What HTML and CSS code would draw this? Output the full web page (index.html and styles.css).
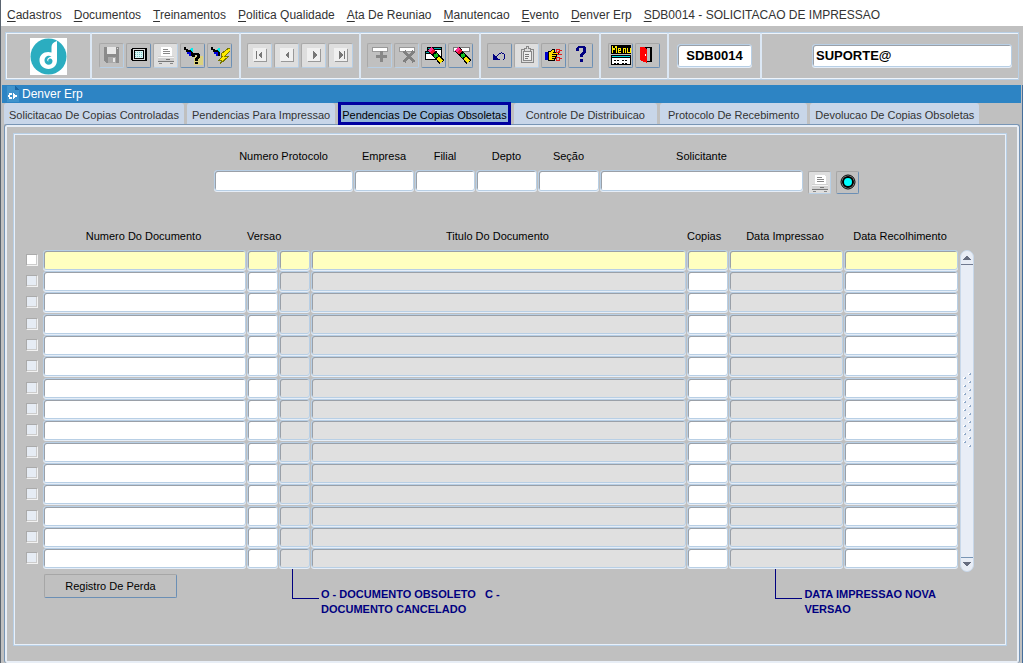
FILE: index.html
```html
<!DOCTYPE html>
<html lang="pt-BR">
<head>
<meta charset="utf-8">
<title>Denver Erp</title>
<link rel="stylesheet" href="styles.css">
</head>
<body>
<nav class="menubar">
  <a href="#"><u>C</u>adastros</a>
  <a href="#"><u>D</u>ocumentos</a>
  <a href="#"><u>T</u>reinamentos</a>
  <a href="#"><u>P</u>olitica Qualidade</a>
  <a href="#"><u>A</u>ta De Reuniao</a>
  <a href="#"><u>M</u>anutencao</a>
  <a href="#"><u>E</u>vento</a>
  <a href="#"><u>D</u>enver Erp</a>
  <a href="#"><u>S</u>DB0014 - SOLICITACAO DE IMPRESSAO</a>
</nav>

<header class="toolbar">
  <div class="group group-logo">
    <svg class="logo" viewBox="0 0 37 37" aria-label="Denver">
      <rect width="37" height="37" fill="#fff"/>
      <circle cx="18.500" cy="18.500" r="18" fill="#2badc0"/>
      <path d="M27 3C23.500 4 21.500 6 21.500 9V14.500C15 12.500 9.500 16.500 9.500 22C9.500 27.500 13.500 31 18.500 31C23.500 31 27 27.500 27 22Z" fill="#fff"/>
      <path d="M21.500 18.500C18 16.500 14.500 19 14.500 22.500C14.500 25 16.500 26.800 18.500 26.800C21 26.800 22.500 25 22.500 23C22.500 21 20.500 20 19 21C18 21.600 18 23 18.600 23.600C16.500 23 16.500 19.500 21.500 18.500Z" fill="#2badc0"/>
    </svg>
  </div>
  <div class="group">
    <button class="tool off" aria-label="Salvar"><svg viewBox="0 0 20 20"><path d="M2 2H17V18H4L2 16Z" fill="#8b8b8b"/><path d="M5 2H14V9H5Z" fill="#e8e8e8"/><path d="M6 12H14V18H6Z" fill="#aaa"/><path d="M11 13H13V17H11Z" fill="#e8e8e8"/><path d="M15 3H16V4H15Z" fill="#ddd"/></svg></button>
    <button class="tool" aria-label="Tela"><svg viewBox="0 0 20 20"><path d="M3 3H17L18 4V15L17 16H3L2 15V4Z" fill="#000"/><path d="M4 4H16V15H4Z" fill="#d8d8d8"/><path d="M5 5H15V14H5Z" fill="#000"/><path d="M6 6H14V13H6Z" fill="#d8f4f4"/><path d="M6 7H14M6 9H14M6 11H14" stroke="#7cc4c4" stroke-dasharray="1 1"/></svg></button>
    <button class="tool off light" aria-label="Imprimir"><svg viewBox="0 0 20 20"><use href="#printer"/></svg></button>
    <button class="tool" aria-label="Consultar"><svg viewBox="0 0 20 20"><use href="#torch"/><path d="M11 11H20V20H11Z" fill="#dcd27c"/><path d="M10 8H16V9H17V13H16V14H15V16H12V13H13V12H14V10H12V12H9V9H10ZM12 17H15V19H12Z" fill="#000"/></svg></button>
    <button class="tool" aria-label="Executar"><svg viewBox="0 0 20 20"><use href="#torch"/><path d="M19 3L11 9V11H13L9 15H12L10 19L18 12V11H15L20 6V3Z" fill="#ffec00" stroke="#777700"/></svg></button>
  </div>
  <div class="group tight">
    <button class="tool off light" aria-label="Primeiro"><svg viewBox="0 0 20 20"><use href="#page"/><path d="M6 6H7V14H6ZM12 6V14L8 10Z" fill="#777"/></svg></button>
    <button class="tool off light" aria-label="Anterior"><svg viewBox="0 0 20 20"><use href="#page"/><path d="M12 6V14L8 10Z" fill="#777"/></svg></button>
    <button class="tool off light" aria-label="Proximo"><svg viewBox="0 0 20 20"><use href="#page"/><path d="M9 6V14L13 10Z" fill="#777"/></svg></button>
    <button class="tool off light" aria-label="Ultimo"><svg viewBox="0 0 20 20"><use href="#page"/><path d="M13 6H14V14H13ZM8 6V14L12 10Z" fill="#777"/></svg></button>
  </div>
  <div class="group tight">
    <button class="tool off" aria-label="Inserir"><svg viewBox="0 0 20 20"><use href="#row"/><path d="M10 6H13V10H17V13H13V17H10V13H6V10H10Z" fill="#888"/></svg></button>
    <button class="tool off" aria-label="Excluir"><svg viewBox="0 0 20 20"><use href="#row"/><path d="M7 6L17 17M17 6L7 17" stroke="#808080" stroke-width="3"/></svg></button>
    <button class="tool" aria-label="Limpar tela"><svg viewBox="0 0 20 20"><path d="M3 2H18V12H3Z" fill="#000"/><path d="M4 3H17V4H4Z" fill="#0aa"/><path d="M4 5H17V11H4Z" fill="#fff"/><path d="M1 6H13V15H1Z" fill="#000"/><path d="M2 7H12V8H2Z" fill="#0aa"/><path d="M2 9H12V14H2Z" fill="#fff"/><use href="#eraser"/></svg></button>
    <button class="tool" aria-label="Limpar"><svg viewBox="0 0 20 20"><path d="M2 2H18V6H2Z" fill="#fff" stroke="#777"/><use href="#eraser"/></svg></button>
  </div>
  <div class="group tight">
    <button class="tool" aria-label="Desfazer"><svg viewBox="0 0 20 20"><path d="M3 8V15H10V14H8L3 9Z" fill="#000080"/><path d="M6 12L9 9C11 7 15 8 15 11C15 13 14 14 13 15" fill="none" stroke="#000080"/></svg></button>
    <button class="tool off light" aria-label="Colar"><svg viewBox="0 0 20 20"><path d="M4 4H16V17H4Z" fill="none" stroke="#888"/><path d="M6 6H14V15H6Z" fill="#eee" stroke="#888"/><path d="M7 3H9V1H11V3H13V6H7Z" fill="#ddd" stroke="#888"/><path d="M8 9H12M8 11H12M8 13H11" stroke="#777"/></svg></button>
    <button class="tool" aria-label="Lista"><svg viewBox="0 0 20 20"><path d="M1 7H4V15H1Z" fill="#00c"/><path d="M4 7L7 6L9 4L11 5L10 7H14V9H12V11H11V13H10V15H4Z" fill="#ffdf00" stroke="#000"/><path d="M8 9H12M8 11H11M8 13H10" stroke="#000"/><path d="M12 4H15V7H12ZM12 12H15V15H12ZM14 7L18 5M14 12L18 14M13 9H18" fill="none" stroke="#e21a1a"/></svg></button>
    <button class="tool" aria-label="Ajuda"><svg viewBox="0 0 20 20"><path d="M5 3L7 1H13L15 3V7L12 10V12H9V9L12 6V3H8V6H5ZM9 14H12V17H9Z" fill="#000080"/></svg></button>
  </div>
  <div class="group">
    <button class="tool" aria-label="Menu"><svg viewBox="0 0 20 20"><path d="M0 0H20V9H0ZM0 10H20V20H0Z" fill="#000"/><path d="M1 8V1L3 5L5 1V8M10 7H7V3H9V5H7M12 8V3H14V8M16 3V7H19V3" fill="none" stroke="#ffec00"/><path d="M1 11H19V12H1Z" fill="#0dd"/><path d="M1 13H19V19H1Z" fill="#fff"/><path d="M3 15H9M11 15H17M3 18H9M11 18H17" stroke="#000" stroke-dasharray="2 1"/></svg></button>
    <button class="tool" aria-label="Sair"><svg viewBox="0 0 20 20"><path d="M2 2H14V17H5Z" fill="#000"/><path d="M9 3H12V16H9Z" fill="#bbb"/><path d="M2 2H6L9 4V18L2 15Z" fill="#f00"/><path d="M7 9H8V11H7Z" fill="#fff"/></svg></button>
  </div>
  <div class="group group-code"><input class="field strong code" aria-label="Programa" value="SDB0014"></div>
  <div class="group group-user"><input class="field strong" aria-label="Usuario" value="SUPORTE@"></div>
</header>

<main class="window">
  <h1 class="titlebar">
    <svg class="doc" viewBox="0 0 12 16"><path d="M0 0H8L12 4V16H0Z" fill="#3f93cc"/><path d="M8 0V4H12Z" fill="#1b66a3"/><path d="M2 7H5V9H3V11H5V13H2V11H1V9H2ZM6 7L11 10L6 13Z" fill="#fff"/></svg>
    Denver Erp
  </h1>
  <div class="tabs" role="tablist">
    <button class="tab" role="tab">Solicitacao De Copias Controladas</button>
    <button class="tab" role="tab">Pendencias Para Impressao</button>
    <button class="tab active" role="tab" aria-selected="true">Pendencias De Copias Obsoletas</button>
    <button class="tab wide" role="tab">Controle De Distribuicao</button>
    <button class="tab medium" role="tab">Protocolo De Recebimento</button>
    <button class="tab" role="tab">Devolucao De Copias Obsoletas</button>
  </div>
  <div class="panel">
    <section class="frame">
      <form class="search">
        <label>Numero Protocolo<input class="field"></label>
        <label>Empresa<input class="field"></label>
        <label>Filial<input class="field"></label>
        <label>Depto<input class="field"></label>
        <label>Seção<input class="field"></label>
        <label>Solicitante<input class="field"></label>
        <div class="actions">
          <button type="button" class="tool off light" aria-label="Imprimir"><svg viewBox="0 0 20 20"><use href="#printer"/></svg></button>
          <button type="button" class="tool" aria-label="Filtrar"><svg class="round" viewBox="0 0 20 20"><circle cx="10" cy="9" r="7" fill="#aaa" stroke="#000"/><circle cx="10" cy="9" r="5" fill="#0ff" stroke="#000" stroke-width="2"/></svg></button>
        </div>
      </form>

      <div class="grid">
        <table class="records">
          <colgroup>
            <col class="c-check"><col class="c-doc"><col class="c-ver"><col class="c-ver"><col><col class="c-copies"><col class="c-print"><col class="c-return">
          </colgroup>
          <thead>
            <tr><th></th><th>Numero Do Documento</th><th colspan="2" class="left">Versao</th><th>Titulo Do Documento</th><th class="left">Copias</th><th>Data Impressao</th><th>Data Recolhimento</th></tr>
          </thead>
          <tbody id="rows"></tbody>
        </table>
        <div class="scroll">
          <button class="arrow up" aria-label="Subir"><svg viewBox="0 0 8 5"><path d="M0 5L4 0L8 5Z" fill="#666d80"/></svg></button>
          <svg class="grip" viewBox="0 0 8 76"><defs><pattern id="dots" width="8" height="8" patternUnits="userSpaceOnUse"><path d="M5 0H7V1H6V2H5ZM0 4H2V5H1V6H0Z" fill="#fff"/><path d="M6 2V1H7V0H8V2ZM1 6V5H2V4H3V6Z" fill="#8fa9c9"/></pattern></defs><rect width="8" height="76" fill="url(#dots)"/></svg>
          <button class="arrow down" aria-label="Descer"><svg viewBox="0 0 8 5"><path d="M0 0L4 5L8 0Z" fill="#666d80"/></svg></button>
        </div>
      </div>

      <footer class="foot">
        <button class="plain">Registro De Perda</button>
        <p class="note"><span class="elbow"></span><span>O - DOCUMENTO OBSOLETO &nbsp; C -<br>DOCUMENTO CANCELADO</span></p>
        <p class="note note-end"><span class="elbow"></span><span>DATA IMPRESSAO NOVA<br>VERSAO</span></p>
      </footer>
    </section>
  </div>
</main>

<svg class="defs" aria-hidden="true">
  <defs>
    <g id="printer"><path d="M5 2H14L16 4V11H5Z" fill="#fff"/><path d="M7 4H12M7 6H14M7 8H14" stroke="#888"/><path d="M2 11H18V17H2Z" fill="#d0d0d0"/><path d="M2 12H18V13H2Z" fill="#f4f4f4"/><path d="M10 14H14V15H10ZM2 16H18V17H2Z" fill="#777"/><path d="M3 18H6M14 18H17" stroke="#888"/></g>
    <g id="torch"><path d="M1 2H3V4H5V5H10V11H7V9H5V7H3V5H1Z" fill="#000"/><path d="M6 4L10 3V7Z" fill="#0ee"/><path d="M4 7H8V11H6V9H4Z" fill="#0000e0"/></g>
    <g id="page"><path d="M4 4H17V17H4Z" fill="#999"/><path d="M3 3H16V16H3Z" fill="#f0f0f0"/></g>
    <g id="row"><path d="M2 2H17V6H2Z" fill="#fff" stroke="#999"/></g>
    <g id="eraser" fill="none"><path d="M6 4L18 17" stroke="#000" stroke-width="6"/><path d="M6 4L8 6" stroke="#ff2f92" stroke-width="5"/><path d="M8 6L10 8" stroke="#e81030" stroke-width="5"/><path d="M11 9L13 12" stroke="#10c020" stroke-width="4"/><path d="M14 13L18 17" stroke="#ffe800" stroke-width="4"/></g>
  </defs>
</svg>
<script src="rows.js"></script>
</body>
</html>
```

FILE: styles.css
```css
* { box-sizing: border-box; }

body {
  margin: 0;
  min-height: 100vh;
  display: flex;
  flex-direction: column;
  border-left: 1px solid #5a6470;
  background: #c0c0c0;
  color: #000;
  font-family: "Liberation Sans", Arial, sans-serif;
  font-size: 11px;
}

button, input { font: inherit; color: inherit; margin: 0; }
button { padding: 0; }
svg { display: block; shape-rendering: crispEdges; }
.defs { display: none; }
.round { shape-rendering: auto; }

.menubar {
  display: flex;
  gap: 12px;
  height: 26px;
  padding: 3px 6px 0;
  align-items: center;
  background: #fff;
  font-size: 12px;
  line-height: 16px;
  white-space: nowrap;
}
.menubar a { color: #333; text-decoration: none; }
.menubar u { text-underline-offset: 2px; }

.toolbar {
  display: flex;
  height: 48px;
  margin: 6px 4px 5px;
  border: 1px solid #b8cfe5;
  box-shadow: inset 0 1px #eef4fb, inset 0 -1px #eef4fb, inset 1px 0 #eef4fb;
}
.group {
  display: flex;
  align-items: center;
  gap: 2px;
  padding: 0 7px 2px;
  border-right: 2px solid #dce8f5;
}
.group.tight { padding: 0 6px 2px; }
.group-logo { padding: 0 23px 0 24px; }
.group-code { padding: 0 8px 2px; }
.group-user { flex: 1; border-right: 0; padding: 0 6px 2px 50px; }
.group-user .field { flex: 1; min-width: 0; }
.logo { width: 37px; height: 37px; shape-rendering: auto; }

.tool {
  display: grid;
  place-items: center;
  width: 25px;
  height: 25px;
  border: 1px solid;
  border-color: #a6a6a6 #6b8fb5 #6b8fb5 #a6a6a6;
  border-radius: 2px;
  background: #c0c0c0;
}
.tool svg { width: 20px; height: 20px; }
.tool.off { border-color: #a9a9a9 #b8cfe5 #b8cfe5 #a9a9a9; }
.tool.light { background: #dedede; }

.field {
  height: 21px;
  width: 100%;
  padding: 0 3px;
  border: 1px solid #b8cfe5;
  border-radius: 3px;
  background: #fff;
  box-shadow: inset 1px 1px #9aa0a8, 0 1px #e6eef8;
  outline: 0;
}
.field.strong { height: 23px; font-size: 13px; font-weight: bold; }
.field.code { width: 75px; text-align: center; }

.window {
  flex: 1;
  display: flex;
  flex-direction: column;
  border-right: 1px solid #466f9c;
}
.titlebar {
  display: flex;
  align-items: center;
  gap: 3px;
  height: 18px;
  margin: 0 1px;
  padding-left: 5px;
  background: #2d84c4;
  color: #fff;
  font-size: 12px;
  font-weight: normal;
}
.doc { width: 12px; height: 16px; }

.tabs { display: flex; gap: 3px; padding: 0 3px; height: 21px; white-space: nowrap; }
.tab {
  padding: 2px 5px 0;
  border: 0;
  border-radius: 3px 3px 0 0;
  background: #c8d6e9;
  color: #333;
}
.tab.active {
  height: 23px;
  margin-top: -1px;
  padding: 2px 1px 0;
  border: 3px solid #0000a0;
  border-radius: 0;
  background: #93b5d8;
  color: #000;
  position: relative;
}
.tab.wide { padding: 2px 12px 0; }
.tab.medium { padding: 2px 8px 0; }

.panel {
  flex: 1;
  margin: 0 2px 0 3px;
  padding: 8px 12px 14px 8px;
  border: 1px solid #7895b5;
  border-bottom: 0;
  border-radius: 3px;
  box-shadow: inset 0 0 0 2px #e8eef6;
}
.frame {
  min-height: 100%;
  padding: 15px 32px 28px 12px;
  border: 1px solid #b8cfe5;
  box-shadow: inset 0 0 0 1px #e8f0fa;
}

.search {
  display: grid;
  grid-template-columns: 139px 60px 60px 61px 61px 203px auto;
  gap: 1px;
  padding-left: 188px;
  padding-top: 1px;
}
.search label { display: flex; flex-direction: column; align-items: center; gap: 8px; line-height: 12px; }
.actions { display: flex; align-items: start; gap: 5px; padding: 21px 0 0 4px; }
.actions .tool { width: 23px; height: 23px; }

.grid { display: flex; padding-top: 31px; }
.records { flex: 1; border-collapse: collapse; table-layout: fixed; width: 0; height: 344px; }
.c-check { width: 17px; }
.c-doc { width: 204px; }
.c-ver { width: 32px; }
.c-copies { width: 42px; }
.c-print { width: 115px; }
.c-return { width: 115px; }
.records th { height: 24px; padding: 0 3px 2px 0; font-weight: normal; text-align: center; white-space: nowrap; }
.records th.left { text-align: left; padding-right: 0; }
.records td { padding: 0 1px 0 0; line-height: 0; }
.records .field { height: 20px; vertical-align: top; }
.records .field[readonly] { background: #e0e0e0; }
.records tr.current .field { background: #ffffc0; }
.check {
  appearance: none;
  width: 12px;
  height: 12px;
  border: 1px solid;
  border-color: #aaa #f2f2f2 #f2f2f2 #aaa;
  background: #e6ecf4;
  box-shadow: inset -1px -1px #ccc;
}
.current .check { background: #fff; }

.scroll {
  display: flex;
  flex-direction: column;
  justify-content: space-between;
  align-items: center;
  width: 14px;
  margin: 25px 0 -3px 1px;
  border: 1px solid #c8d8ea;
  border-radius: 7px;
  background: #e8edf6;
}
.arrow { display: grid; place-items: center; width: 12px; height: 14px; border: 0; background: none; }
.arrow svg { width: 8px; height: 5px; }
.arrow.up { border-bottom: 1px solid #707a90; }
.arrow.down { border-top: 1px solid #7895b5; }
.grip { width: 8px; height: 76px; }

.foot { display: flex; align-items: flex-start; padding-left: 18px; }
.plain {
  width: 133px;
  height: 24px;
  margin: 5px 115px 0 0;
  border: 1px solid;
  border-color: #a6a6a6 #6b8fb5 #6b8fb5 #a6a6a6;
  border-radius: 2px;
  background: #c0c0c0;
}
.note { display: flex; gap: 2px; margin: 0; color: #000080; font-weight: bold; line-height: 15px; white-space: nowrap; }
.note span + span { padding-top: 18px; }
.note-end { margin-left: auto; padding-right: 38px; }
.elbow { width: 27px; height: 30px; border: solid #000080; border-width: 0 0 1px 1px; }
```

FILE: rows.js
```js
const body = document.getElementById('rows');
const columns = [
  ['Numero do documento', false],
  ['Versao', false],
  ['Situacao', true],
  ['Titulo do documento', true],
  ['Copias', false],
  ['Data impressao', true],
  ['Data recolhimento', false]
];

for (let i = 0; i < 15; i++) {
  const row = body.insertRow();
  if (i === 0) row.className = 'current';
  const check = document.createElement('input');
  check.type = 'checkbox';
  check.className = 'check';
  check.setAttribute('aria-label', 'Selecionar linha ' + (i + 1));
  row.insertCell().append(check);
  for (const [label, locked] of columns) {
    const field = document.createElement('input');
    field.className = 'field';
    field.readOnly = locked;
    field.setAttribute('aria-label', label + ' ' + (i + 1));
    row.insertCell().append(field);
  }
}
```
